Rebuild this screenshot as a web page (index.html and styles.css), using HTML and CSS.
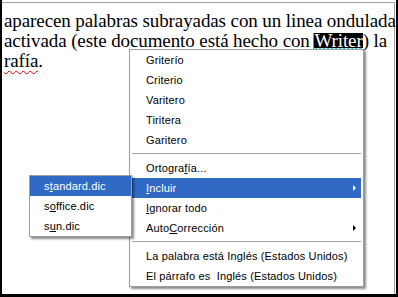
FILE: index.html
```html
<!DOCTYPE html>
<html>
<head>
<meta charset="utf-8">
<link rel="stylesheet" href="styles.css">
</head>
<body>
<div class="frame">
  <div class="page">
    <div class="doc">
      <div class="line">aparecen palabras subrayadas con un linea ondulada</div>
      <div class="line">activada (este documento está hecho con <span class="sel"><span class="caret"></span>Writer<svg class="wave" viewBox="0 0 48 3" preserveAspectRatio="none"><polyline points="0,2.5 2,0.5 4,2.5 6,0.5 8,2.5 10,0.5 12,2.5 14,0.5 16,2.5 18,0.5 20,2.5 22,0.5 24,2.5 26,0.5 28,2.5 30,0.5 32,2.5 34,0.5 36,2.5 38,0.5 40,2.5 42,0.5 44,2.5 46,0.5 48,2.5" fill="none" stroke="#00c8d8" stroke-width="1.3"/></svg></span>) la</div>
      <div class="line"><span class="wavy-red">rafía</span>.</div>
    </div>
  </div>

  <div class="menu main-menu">
    <div class="item">Griterío</div>
    <div class="item">Criterio</div>
    <div class="item">Varitero</div>
    <div class="item">Tiritera</div>
    <div class="item">Garitero</div>
    <div class="sep"></div>
    <div class="item">Ortogra<u>f</u>ía...</div>
    <div class="item active"><u>I</u>ncluir<span class="arrow"></span></div>
    <div class="item"><u>I</u>gnorar todo</div>
    <div class="item">Auto<u>C</u>orrección<span class="arrow"></span></div>
    <div class="sep"></div>
    <div class="item">La palabra está Inglés (Estados Unidos)</div>
    <div class="item">El párrafo es &nbsp;Inglés (Estados Unidos)</div>
  </div>

  <div class="menu sub-menu">
    <div class="item active">s<u>t</u>andard.dic</div>
    <div class="item">s<u>o</u>ffice.dic</div>
    <div class="item">s<u>u</u>n.dic</div>
  </div>
</div>
</body>
</html>
```
FILE: styles.css
```css
html, body {
  margin: 0;
  padding: 0;
  background: #fff;
}
.frame {
  position: relative;
  width: 398px;
  height: 297px;
  box-sizing: border-box;
  border-left: 2px solid #000;
  border-right: 2px solid #000;
  border-bottom: 3px solid #000;
  overflow: hidden;
}
.page {
  margin-top: 2px;
  margin-right: 1px;
  height: 292px;
  box-sizing: border-box;
  border-top: 1px solid #a0a0a0;
  border-right: 1px solid #a0a0a0;
}
.doc {
  padding-top: 8px;
  padding-left: 2px;
  font-family: "Liberation Serif", "Times New Roman", serif;
  font-size: 19px;
  line-height: 20px;
  letter-spacing: -0.1px;
  color: #000;
}
.line {
  white-space: nowrap;
}
.sel {
  position: relative;
  background: linear-gradient(to bottom, transparent 3px, #000 3px, #000 18px, transparent 18px);
  color: #fff;
}
.wave {
  position: absolute;
  left: 0;
  top: 18px;
  width: 100%;
  height: 3px;
  display: block;
}
.caret {
  position: absolute;
  left: -1px;
  top: 3px;
  width: 1px;
  height: 16px;
  background: #888;
}
.wavy-red {
  text-decoration: underline wavy #e00000;
  text-decoration-thickness: 1px;
  text-underline-offset: 3px;
}
.menu {
  position: absolute;
  box-sizing: border-box;
  background: #fff;
  border: 1px solid #9d9d9d;
  box-shadow: 2px 2px 2px rgba(0, 0, 0, 0.45);
  padding: 0 2px;
  font-family: "Liberation Sans", Tahoma, sans-serif;
  font-size: 11px;
  letter-spacing: 0.15px;
  color: #000;
}
.main-menu {
  left: 127px;
  top: 49px;
  width: 235px;
}
.sub-menu {
  left: 27px;
  top: 175px;
  width: 103px;
  padding: 0;
}
.item {
  position: relative;
  height: 20px;
  line-height: 20px;
  padding-left: 14px;
  white-space: nowrap;
}
.item u {
  text-decoration: underline;
  text-underline-offset: 1px;
}
.item.active {
  background: #316ac5;
  color: #fff;
}
.sep {
  height: 1px;
  background: #a6a6a6;
  margin: 3px 0 4px;
}
.arrow {
  position: absolute;
  right: 5px;
  top: 7px;
  width: 0;
  height: 0;
  border-top: 3px solid transparent;
  border-bottom: 3px solid transparent;
  border-left: 3px solid #000;
}
.item.active .arrow {
  border-left-color: #fff;
}
```
